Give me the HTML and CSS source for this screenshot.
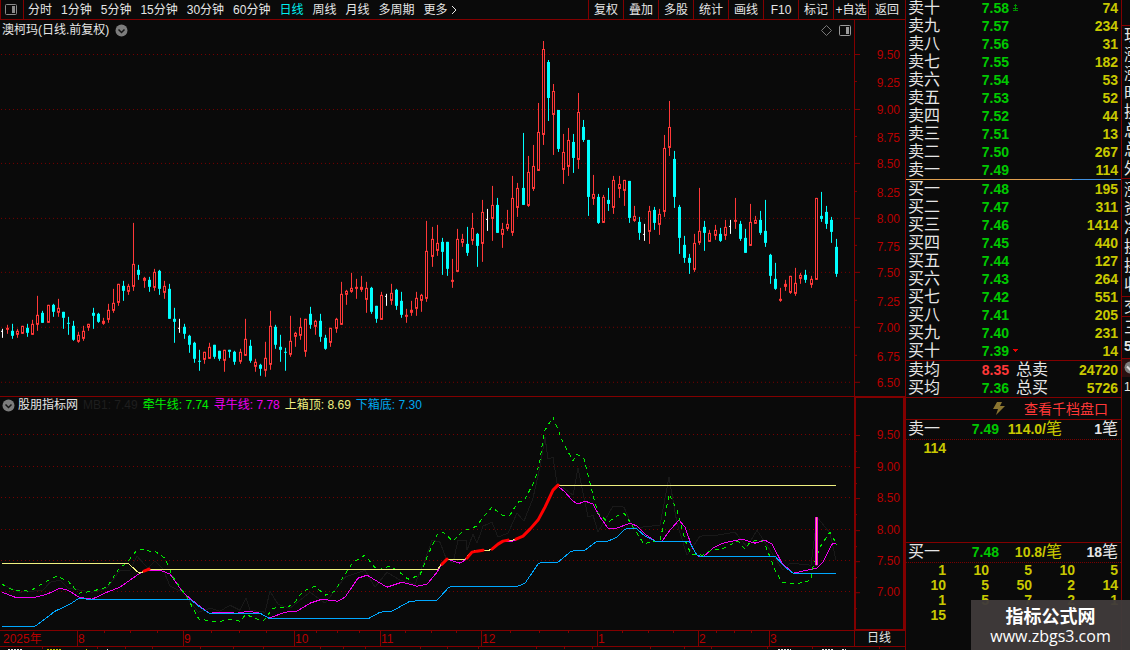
FILE: index.html
```html
<!DOCTYPE html>
<html lang="zh-CN">
<head>
<meta charset="utf-8">
<title>澳柯玛 日线</title>
<link rel="stylesheet" href="styles.css">
</head>
<body>
<div class="app">
  <main class="workspace">
    <nav class="toolbar">
      <button class="layout-btn" aria-label="布局">
        <svg width="14" height="12" viewBox="0 0 14 12"><rect x="1.500" y=".5" width="11" height="10" rx="1" fill="none" stroke="#8a8a8a"/><rect x="8" y="2" width="3" height="7" fill="#8a8a8a"/></svg>
      </button>
      <div class="periods">
        <button>分时</button><button>1分钟</button><button>5分钟</button><button>15分钟</button><button>30分钟</button><button>60分钟</button><button class="active">日线</button><button>周线</button><button>月线</button><button>多周期</button><button class="more">更多<svg width="7" height="10" viewBox="0 0 7 10"><path d="M1 1L5 5L1 9" fill="none" stroke="#e6e6e6"/></svg></button>
      </div>
      <div class="tools">
        <button>复权</button><button>叠加</button><button>多股</button><button>统计</button><button>画线</button><button>F10</button><button>标记</button><button>+自选</button><button>返回</button>
      </div>
    </nav>

    <section class="panel price-panel">
      <div class="plot">
        <header class="plot-head">
          <span>澳柯玛(日线.前复权)</span>
          <svg class="chevron" width="13" height="13" viewBox="0 0 13 13"><circle cx="6.5" cy="6.5" r="6" fill="#7c7c7c"/><path d="M3.5 5.5L6.5 8.5L9.5 5.5" fill="none" stroke="#151515" stroke-width="1.5"/></svg>
          <svg class="head-tools" width="30" height="13" viewBox="0 0 30 13"><path d="M5.5 1.5L10.500 6.5L5.5 11.500L.5 6.5Z" fill="none" stroke="#777"/><rect x="18.500" y="1.500" width="11" height="10" rx="1" fill="none" stroke="#999"/><rect x="25" y="3" width="3" height="7" fill="#999"/></svg>
        </header>
        <svg class="chart" viewBox="0 40 854 356" preserveAspectRatio="none" role="img" aria-label="日K线">
          <g class="grid" id="price-grid"></g>
          <g id="candles"></g>
        </svg>
      </div>
      <svg class="axis" id="price-axis" width="50" viewBox="855 20 50 376" preserveAspectRatio="none"></svg>
    </section>

    <section class="panel indicator-panel">
      <div class="plot">
        <header class="plot-head legend">
          <svg class="chevron" width="13" height="13" viewBox="0 0 13 13"><circle cx="6.5" cy="6.5" r="6" fill="#7c7c7c"/><path d="M3.5 5.5L6.5 8.5L9.5 5.5" fill="none" stroke="#151515" stroke-width="1.5"/></svg>
          <span>股朋指标网</span><span class="faint">MB1: 7.49</span><span class="green">牵牛线: 7.74</span><span class="magenta">寻牛线: 7.78</span><span class="yellow">上箱顶: 8.69</span><span class="blue">下箱底: 7.30</span>
        </header>
        <svg class="chart" viewBox="0 414 854 216" preserveAspectRatio="none" role="img" aria-label="指标线">
          <g class="grid" id="indicator-grid"></g>
          <g class="curves">
            <polyline class="c-faint" points="2,584 20,592 43,590 50,582 60,580 68,588 92,592 107,588 120,570 130,570 137,556 148,568 155,561 163,569 170,586 183,592 198,612 210,608 220,611 230,605 240,610 246,598 250,610 265,612 270,591 278,604 290,608 310,592 325,603 345,577 365,570 375,587 387,572 400,580 415,584 425,560 432,540 440,542 446,558 453,563 458,540 466,540 467,550 473,534 477,543 483,526 492,522 498,537 508,533 517,513 524,521 533,498 540,467 545,437 548,459 553,457 557,483 573,495 578,468 588,517 593,515 598,532 613,506 624,507 633,528 660,525 669,477 677,523 687,555 700,536 717,535 735,532 747,547 757,530 783,570 790,563 811,565 817,517 830,533 836,560"/>
            <polyline class="c-magenta" points="2,592 15,597 35,597 47,594 60,588 68,590 79,597 92,599 107,592 120,587 137,575 147,570 160,570 170,574 183,592 192,600 209,613 222,612 237,613 248,611 260,613 269,618 285,612 297,611 310,603 322,599 338,601 345,597 358,578 367,575 377,581 387,587 402,582 417,586 427,584 437,572 442,564 447,559 460,563 465,560 472,551 489,550 503,541 513,541 524,536 530,529 538,520 545,507 553,490 558,486 565,492 573,501 578,504 585,501 593,504 600,517 608,528 617,528 630,523 637,526 645,534 655,541 662,541 670,530 679,520 685,527 692,547 698,556 704,556 713,548 723,543 742,539 755,543 765,540 772,544 782,563 793,573 817,568 823,562 832,544 836,543"/>
            <polyline class="c-green" points="2,584 13,590 30,591 43,583 57,576 68,581 79,593 92,591 107,587 118,570 128,561 137,550 145,549 151,552 155,551 165,558 173,577 187,597 199,619 207,620 217,622 230,619 240,621 246,614 252,617 263,621 267,617 272,608 288,607 295,602 303,591 315,586 325,595 335,591 343,577 353,562 365,555 377,570 390,566 397,570 408,579 420,575 427,557 437,535 443,532 453,541 463,531 477,526 483,517 492,507 502,515 510,515 518,502 524,501 535,480 540,460 544,432 553,417 562,440 573,461 577,454 584,459 593,495 598,513 608,522 617,516 624,513 630,522 644,544 652,541 660,541 665,517 669,494 677,510 685,540 691,554 703,555 713,549 720,550 738,541 745,549 750,542 760,539 765,544 775,570 782,582 795,584 811,580 813,567 820,547 830,532 837,545"/>
            <polyline class="c-yellow" points="2,563 128,563 139,573 145,571 152,569 438,569 442,563 447,559 465,559 472,551 489,550 492,549 503,541 513,540 524,536 530,529 538,520 545,507 553,490 558,485 836,485"/>
            <polyline class="c-blue" points="2,626 35,626 42,621 55,611 70,604 79,598 88,599 190,599 200,607 209,613 260,613 269,618 369,618 380,612 392,611 410,601 437,600 448,588 452,586 518,586 525,583 538,564 542,562 558,562 570,552 575,550 585,550 597,541 608,541 617,537 625,529 636,528 645,536 655,541 689,541 697,555 700,556 775,556 785,567 793,573 836,573"/>
            <path class="c-red" d="M144 571L149 569M442 564L447 559M467 558L472 552L477 551L483 550M492 549L498 544L503 541L508 540M516 539L523 536L530 529L538 520L545 507L553 490L558 485"/>
          </g>
          <rect x="815" y="517" width="3" height="48" fill="#f000f0"/>
          <rect x="816" y="517" width="1" height="48" fill="#ffa080"/>
        </svg>
      </div>
      <svg class="axis" id="indicator-axis" width="47" viewBox="856 397 47 231" preserveAspectRatio="none"></svg>
    </section>

    <footer class="timeline">
      <svg class="months" id="months" viewBox="0 631 854 15" preserveAspectRatio="none"></svg>
      <span class="period">日线</span>
    </footer>
    <div class="next-row">
      <svg class="next-ticks" id="next-ticks" viewBox="0 647 905 3" preserveAspectRatio="none">
        <path d="M8 649.500h14M107 649.500h1M778 649.500h13M822 649.500h12M842 649.500h4" stroke="#e6e6e6" stroke-dasharray="2 1"/>
        <path d="M47 649.500h15M86 649.500h1" stroke="#c8c800" stroke-dasharray="2 1"/>
      </svg>
    </div>
  </main>

  <aside class="book">
    <table class="levels">
      <colgroup><col class="col-name"><col class="col-price"><col class="col-mark"><col></colgroup>
      <tbody>
        <tr><th>卖十</th><td>7.58</td><td class="mark"><svg width="7" height="8" viewBox="0 0 7 8"><path d="M3 0h1v1h1v1h-1v2h2v1h-2v1h2v1h-5v-1h2v-1h-2v-1h2v-2h-1v-1h1z" fill="#009000"/></svg></td><td>74</td></tr>
        <tr><th>卖九</th><td>7.57</td><td></td><td>234</td></tr>
        <tr><th>卖八</th><td>7.56</td><td></td><td>31</td></tr>
        <tr><th>卖七</th><td>7.55</td><td></td><td>182</td></tr>
        <tr><th>卖六</th><td>7.54</td><td></td><td>53</td></tr>
        <tr><th>卖五</th><td>7.53</td><td></td><td>52</td></tr>
        <tr><th>卖四</th><td>7.52</td><td></td><td>44</td></tr>
        <tr><th>卖三</th><td>7.51</td><td></td><td>13</td></tr>
        <tr><th>卖二</th><td>7.50</td><td></td><td>267</td></tr>
        <tr><th>卖一</th><td>7.49</td><td></td><td>114</td></tr>
      </tbody>
    </table>
    <div class="balance"><div class="balance-sell"></div></div>
    <table class="levels bids">
      <colgroup><col class="col-name"><col class="col-price"><col class="col-mark"><col></colgroup>
      <tbody>
        <tr><th>买一</th><td>7.48</td><td></td><td>195</td></tr>
        <tr><th>买二</th><td>7.47</td><td></td><td>311</td></tr>
        <tr><th>买三</th><td>7.46</td><td></td><td>1414</td></tr>
        <tr><th>买四</th><td>7.45</td><td></td><td>440</td></tr>
        <tr><th>买五</th><td>7.44</td><td></td><td>127</td></tr>
        <tr><th>买六</th><td>7.43</td><td></td><td>264</td></tr>
        <tr><th>买七</th><td>7.42</td><td></td><td>551</td></tr>
        <tr><th>买八</th><td>7.41</td><td></td><td>205</td></tr>
        <tr><th>买九</th><td>7.40</td><td></td><td>231</td></tr>
        <tr><th>买十</th><td>7.39</td><td class="mark"><svg width="7" height="4" viewBox="0 0 7 4"><path d="M1 0h5v1h-1v1h-1v1h-1v-1h-1v-1h-1z" fill="#f00000"/></svg></td><td>14</td></tr>
      </tbody>
    </table>
    <table class="levels totals">
      <colgroup><col class="col-name"><col class="col-price"><col class="col-total"><col></colgroup>
      <tbody>
        <tr><th>卖均</th><td class="up">8.35</td><th class="total">总卖</th><td>24720</td></tr>
        <tr><th>买均</th><td>7.36</td><th class="total">总买</th><td>5726</td></tr>
      </tbody>
    </table>
    <div class="depth-link">
      <svg width="12" height="13" viewBox="0 0 12 13"><path d="M4 0L9 0L7 4L12 4L3 13L5 7L0 7Z" fill="#8a7530"/></svg>
      <a href="#depth">查看千档盘口</a>
    </div>
    <section class="queue sell">
      <div class="queue-head"><span class="q-name">卖一</span><b class="q-price">7.49</b><span class="q-avg"><b>114.0/</b>笔</span><span class="q-count"><b>1</b>笔</span></div>
      <table class="orders"><tbody><tr><td>114</td><td></td><td></td><td></td><td></td></tr></tbody></table>
    </section>
    <section class="queue buy">
      <div class="queue-head"><span class="q-name">买一</span><b class="q-price">7.48</b><span class="q-avg"><b>10.8/</b>笔</span><span class="q-count"><b>18</b>笔</span></div>
      <table class="orders"><tbody>
        <tr><td>1</td><td>10</td><td>5</td><td>10</td><td>5</td></tr>
        <tr><td>10</td><td>5</td><td>50</td><td>2</td><td>14</td></tr>
        <tr><td>1</td><td>5</td><td>7</td><td>2</td><td>1</td></tr>
        <tr><td>15</td><td></td><td></td><td></td><td></td></tr>
      </tbody></table>
    </section>
  </aside>

  <aside class="quote-strip">
    <div class="strip-top"></div>
    <div class="strip-block"><span>现</span><span>涨</span><span>涨</span><span>时</span><span>换</span><span>总</span><span>总</span><span>外</span></div>
    <div class="strip-block padded"><span>涨</span><span>资</span><span>净</span><span>换</span><span>换</span><span>收</span></div>
    <div class="strip-block"><span>交</span></div>
    <div class="strip-block padded"><span>三</span><b>5</b></div>
    <div class="strip-icon"><svg width="13" height="13" viewBox="0 0 13 13"><circle cx="6.5" cy="6.5" r="6" fill="#7c7c7c"/><path d="M3 5.500L6.500 9L10 5.500" fill="none" stroke="#ddd" stroke-width="2"/></svg></div>
    <small>1</small>
  </aside>

  <div class="watermark"><strong>指标公式网</strong><span>www.zbgs3.com</span></div>
</div>
<script src="chart.js"></script>
</body>
</html>
```
FILE: styles.css
```css
* { box-sizing: border-box; }
body {
  margin: 0;
  background: #0a0a0a;
  color: #e6e6e6;
  font: 12px/18px "Liberation Sans", "Noto Sans CJK SC", sans-serif;
  overflow: hidden;
}
button {
  margin: 0;
  padding: 0;
  border: 0;
  background: none;
  color: inherit;
  font: inherit;
  white-space: nowrap;
}
svg { display: block; }
.app { position: relative; display: flex; height: 100vh; overflow: hidden; }

.workspace { flex: 1; min-width: 0; display: flex; flex-direction: column; }
.toolbar { flex: none; display: flex; height: 20px; border-bottom: 1px solid #820000; }
.layout-btn {
  width: 24px;
  padding-left: 3px;
  border-left: 1px solid #820000;
  border-right: 1px solid #820000;
}
.periods { flex: 1; display: flex; gap: 9px; padding-left: 4px; }
.periods .active { color: #00f0f0; }
.more { display: flex; align-items: center; gap: 3px; }
.tools { display: flex; }
.tools button { width: 35px; border-left: 1px solid #820000; }
.tools button:last-child { width: 37px; }

.panel { display: flex; min-height: 0; border-bottom: 1px solid #820000; }
.price-panel { flex: 377; }
.indicator-panel { flex: 234; }
.plot { flex: 1; min-width: 0; display: flex; flex-direction: column; }
.plot-head { flex: none; display: flex; align-items: center; gap: 6px; height: 20px; padding: 0 3px 0 2px; }
.head-tools { margin-left: auto; }
.legend { height: 17px; gap: 5px; }
.legend .chevron { margin-right: -2px; }
.chart { flex: 1; width: 100%; min-height: 0; }
.axis { flex: none; height: 100%; box-sizing: content-box; border-left: 1px solid #820000; }
.indicator-panel .axis {
  height: auto;
  border: 2px solid #820000;
  border-top-width: 1px;
  border-bottom-width: 1px;
}
.axis text, .months text { fill: #b80000; font-size: 12px; }
.axis text { text-anchor: end; }
.axis rect, .months rect, .next-ticks rect { fill: #820000; }

.faint { color: #1e1e1e; }
.green { color: #00f000; }
.magenta { color: #f000f0; }
.yellow { color: #f0f080; }
.blue { color: #00a8f0; }

.grid line { stroke: #780000; stroke-dasharray: 1 3; shape-rendering: crispEdges; }
.curves { fill: none; stroke-width: 1; }
.curves polyline { shape-rendering: crispEdges; }
.c-faint { stroke: #191919; }
.c-green { stroke: #00f000; stroke-dasharray: 4 4; }
.c-magenta { stroke: #f000f0; }
.c-yellow { stroke: #f0f080; }
.c-blue { stroke: #00a8ff; }
.c-red { stroke: #ff0000; stroke-width: 3; stroke-linecap: round; stroke-linejoin: round; }
.up-candle { fill: #0a0a0a; stroke: #ff3838; shape-rendering: crispEdges; }
.up-wick { fill: #ff3838; }
.down-wick { fill: #00ffff; }
.flat-wick { fill: #ffffff; }

.timeline { flex: none; display: flex; height: 16px; border-bottom: 1px solid #820000; line-height: 15px; }
.months { flex: 1; min-width: 0; height: 15px; }
.period { width: 51px; padding-left: 12px; border-left: 1px solid #820000; }
.next-row { flex: none; height: 3px; }
.next-ticks { width: 100%; height: 3px; }

.book {
  flex: none;
  width: 216px;
  display: flex;
  flex-direction: column;
  border-left: 1px solid #820000;
  font-size: 16px;
}
.levels { flex: none; width: 100%; table-layout: fixed; border-collapse: collapse; margin-top: -1px; }
.bids { margin-top: 0; }
.col-name { width: 50px; }
.col-price { width: 53px; }
.col-mark { width: 12px; }
.col-total { width: 45px; }
.levels tr { height: 18px; }
.levels th, .levels td { height: 18px; padding: 0; line-height: 18px; }
.levels th { padding-left: 2px; text-align: left; font-weight: 400; white-space: nowrap; }
.levels td { color: #00c800; font-size: 14px; font-weight: 700; text-align: right; }
.levels td:last-child { padding-right: 3px; color: #c8c800; }
.levels .mark { padding-left: 3px; }
.levels .up { color: #ff3838; }
.levels .total { padding-left: 7px; }
.balance { flex: none; height: 1px; background: #4090e0; }
.balance-sell { width: 77%; height: 1px; background: #e0a050; }
.totals { margin-top: 0; border-top: 1px solid #820000; }
.depth-link {
  flex: none;
  display: flex;
  align-items: center;
  gap: 19px;
  height: 23px;
  padding-left: 87px;
  border-top: 1px solid #820000;
  border-bottom: 1px solid #820000;
}
.depth-link a { color: #ff3838; font-size: 14px; text-decoration: none; }
.queue.sell { flex: none; height: 123px; border-bottom: 1px solid #820000; }
.queue.sell .orders td { height: 17px; }
.queue.buy { flex: 1; }
.queue-head {
  display: flex;
  height: 20px;
  padding: 0 3px 0 2px;
  border-bottom: 1px dotted #780000;
  white-space: nowrap;
}
.queue-head b { font-size: 14px; }
.q-name { width: 50px; }
.q-price { width: 41px; color: #00c800; text-align: right; }
.q-avg { width: 63px; color: #c8c800; text-align: right; }
.q-count { flex: 1; text-align: right; }
.orders { width: 100%; table-layout: fixed; border-collapse: collapse; }
.orders td {
  height: 15px;
  padding: 0 3px 0 0;
  color: #c8c800;
  font-size: 14px;
  font-weight: 700;
  line-height: 15px;
  text-align: right;
}

.quote-strip {
  flex: none;
  width: 9px;
  overflow: hidden;
  border-left: 1px solid #820000;
  font-size: 16px;
}
.strip-top { height: 26px; border-bottom: 1px solid #820000; }
.strip-block { width: 24px; padding-left: 2px; border-bottom: 1px solid #820000; }
.strip-block.padded { padding-top: 1px; padding-bottom: 2px; }
.strip-block span, .strip-block b { display: block; height: 19px; line-height: 19px; }
.strip-block b { font-size: 14px; }
.strip-icon { width: 16px; height: 18px; padding: 2px 0 0 2px; background: #2a1010; }
.quote-strip small { padding-left: 2px; font-size: 12px; }

.watermark {
  position: absolute;
  right: 0;
  bottom: 0;
  display: flex;
  flex-direction: column;
  align-items: center;
  width: 159px;
  height: 50px;
  padding-top: 4px;
  background: rgba(64, 58, 58, 0.96);
  color: #ffffff;
}
.watermark strong { font: 700 18px/22px "Noto Sans CJK SC", sans-serif; }
.watermark span { font: 16px/20px "Open Sans", sans-serif; }
```
FILE: chart.js
```js
const NS = 'http://www.w3.org/2000/svg';
const add = (parent, name, attrs, text) => {
  const el = document.createElementNS(NS, name);
  for (const key in attrs) el.setAttribute(key, attrs[key]);
  if (text) el.textContent = text;
  parent.appendChild(el);
};
const byId = id => document.getElementById(id);

// x, high, body top, body bottom, low, kind (r rise, c fall, w unchanged)
const candles = `2 329 331 332 338 w|7 325 328 330 334 r|12 324 331 336 339 c|17 329 331 335 338 r|22 326 326 334 334 r|27 324 328 333 337 c|32 320 324 335 335 r|37 296 315 325 331 r|42 311 313 323 323 c|48 305 305 323 323 r|53 304 305 312 317 c|58 299 308 313 317 r|63 312 312 318 329 c|68 317 323 324 335 c|73 321 326 340 341 c|78 332 335 342 343 r|83 326 331 339 341 r|88 324 324 328 331 r|93 308 313 316 329 c|98 313 314 322 323 c|103 318 321 324 325 r|108 304 310 320 323 r|113 289 303 311 313 r|118 284 284 303 306 r|123 281 286 291 301 c|128 284 286 292 295 r|133 223 264 287 291 r|138 265 270 275 280 c|144 277 278 281 288 r|149 277 280 287 292 c|154 269 272 288 291 r|159 270 271 289 295 c|164 281 286 293 299 r|169 284 289 319 319 c|174 308 319 322 343 c|179 319 328 329 333 w|184 324 327 334 339 c|189 335 336 345 353 c|194 342 343 359 363 c|199 350 361 362 371 c|204 352 352 360 364 r|209 343 347 359 359 r|214 345 345 357 359 c|219 351 351 359 361 c|224 350 350 361 372 r|229 350 350 352 358 c|234 351 352 362 365 c|240 349 352 362 364 r|245 319 339 356 356 r|250 340 346 361 363 c|255 359 362 367 372 r|260 364 365 369 376 c|265 342 358 371 377 r|270 311 326 365 370 r|275 325 327 345 349 c|280 335 347 350 362 c|285 348 352 353 371 c|290 316 341 355 357 r|295 332 333 337 347 r|300 318 327 336 340 r|305 319 319 352 357 r|310 307 314 325 329 c|315 320 321 327 335 r|320 314 321 337 342 c|325 335 338 349 350 c|330 328 328 343 347 r|336 318 319 329 333 r|341 282 294 325 325 r|346 290 291 295 305 r|351 273 288 292 293 r|356 279 287 289 299 r|361 276 287 290 292 r|366 282 288 300 313 r|371 287 288 312 314 c|376 306 306 319 323 c|381 292 295 320 320 r|386 294 296 297 306 w|391 284 293 301 305 r|396 289 290 306 310 c|401 292 301 315 318 c|406 309 315 317 323 r|411 301 310 313 316 r|416 292 298 309 316 r|421 294 295 301 312 r|426 221 251 299 302 r|432 227 239 257 267 r|437 225 243 251 256 r|442 238 242 252 275 c|447 242 242 269 276 c|452 259 280 282 288 r|457 229 239 272 272 r|462 234 239 243 247 r|467 227 244 253 256 c|472 213 228 241 245 r|477 233 234 246 267 c|482 200 212 244 262 r|487 209 219 220 231 w|492 186 205 219 241 r|497 198 205 233 233 c|502 223 229 235 248 r|507 210 224 229 231 r|512 176 198 233 236 r|517 183 188 208 217 r|523 133 188 205 205 c|528 156 172 206 207 r|533 145 166 189 191 r|538 103 132 171 171 r|543 41 49 135 145 r|548 60 62 98 121 c|553 84 91 115 155 r|558 110 110 149 152 c|563 134 152 170 184 r|568 128 140 167 176 r|573 134 142 158 173 c|578 93 112 160 169 r|583 120 127 140 142 c|588 140 140 197 216 c|593 175 194 199 205 r|598 194 197 223 224 c|603 195 197 223 223 r|608 188 200 204 211 c|613 176 180 208 214 r|619 176 184 189 198 r|624 180 180 191 206 r|629 181 181 218 223 c|634 206 216 221 222 r|639 217 222 233 240 c|644 224 234 235 241 w|649 206 211 232 244 r|654 207 210 223 230 c|659 209 214 225 235 r|664 135 148 212 217 r|669 101 127 148 156 r|674 151 159 197 208 c|679 205 207 238 254 c|684 236 245 258 263 c|689 254 258 263 274 c|694 234 243 270 272 r|699 188 231 243 245 r|704 221 227 233 251 c|709 230 233 242 242 r|715 225 230 236 240 r|720 228 234 241 242 c|725 220 227 236 240 r|730 220 226 227 234 w|735 198 220 222 229 r|740 221 224 239 241 c|745 229 238 253 253 c|750 204 222 246 246 r|755 216 220 224 224 r|760 211 220 233 235 c|765 200 231 243 247 c|770 254 255 276 284 c|775 263 279 289 290 c|780 288 299 301 302 r|785 280 284 287 291 r|790 276 276 293 294 r|795 268 283 294 296 r|800 273 275 279 284 r|805 270 275 280 283 c|811 276 279 285 288 r|816 198 198 280 280 r|821 192 216 219 222 c|826 206 212 224 229 c|831 217 220 232 243 c|836 239 247 274 277 c`;

const layer = byId('candles');
for (const row of candles.split('|')) {
  const parts = row.split(' ');
  const kind = parts[5];
  const [x, high, top, bottom, low] = parts.slice(0, 5).map(Number);
  const cls = { r: 'up-wick', c: 'down-wick', w: 'flat-wick' }[kind];
  add(layer, 'rect', { x, y: high, width: 1, height: Math.max(low - high, 1), class: cls });
  if (kind === 'w') {
    add(layer, 'rect', { x: x - 1, y: top, width: 1, height: 1, class: cls });
  } else if (kind === 'r' && bottom - top > 2) {
    add(layer, 'rect', { x: x - 0.5, y: top + 0.5, width: 2, height: bottom - top - 1, class: 'up-candle' });
  } else {
    add(layer, 'rect', { x: x - 1, y: top, width: 3, height: bottom - top, class: cls });
  }
}

const grid = (id, rows) => rows.forEach(y =>
  add(byId(id), 'line', { x1: 1, x2: 852, y1: y + 0.5, y2: y + 0.5 }));
grid('price-grid', [54, 109, 163, 218, 272, 327, 382]);
grid('indicator-grid', [434, 466, 497, 529, 560, 591]);

const priceAxis = byId('price-axis');
[54, 81, 109, 136, 163, 191, 218, 245, 272, 300, 327, 355, 382].forEach((y, i) => {
  add(priceAxis, 'rect', { x: 855, y, width: i % 2 ? 2 : 5, height: 1 });
  add(priceAxis, 'text', { x: 900, y: y + (i % 2 ? 6 : 5) }, (9.5 - i * 0.25).toFixed(2));
});
const indicatorAxis = byId('indicator-axis');
[434, 466, 497, 529, 560, 591].forEach((y, i) => {
  add(indicatorAxis, 'rect', { x: 856, y, width: 4, height: 1 });
  add(indicatorAxis, 'rect', { x: 856, y: y + 16, width: 1, height: 1 });
  add(indicatorAxis, 'text', { x: 900, y: y + 4 }, (9.5 - i * 0.5).toFixed(2));
});

const months = byId('months');
add(months, 'text', { x: 3, y: 643 }, '2025年');
[[77, '8'], [183, '9'], [294, '10'], [380, '11'], [481, '12'], [597, '1'], [698, '2'], [769, '3']].forEach(([x, name]) => {
  add(months, 'rect', { x, y: 631, width: 1, height: 15 });
  add(months, 'text', { x: x + 1, y: 643 }, name);
});
[104, 130, 157, 211, 239, 266, 316, 337, 359, 405, 431, 456, 510, 539, 568, 622, 648, 673, 716, 734, 751].forEach(x =>
  add(months, 'rect', { x, y: 631, width: 1, height: 2 }));
[42, 97, 125, 152, 200, 233, 263, 320, 343, 365, 420, 447, 478, 536, 564, 592, 650, 684, 711, 767, 812, 879].forEach(x =>
  add(byId('next-ticks'), 'rect', { x, y: 647, width: 1, height: 2 }));
```
